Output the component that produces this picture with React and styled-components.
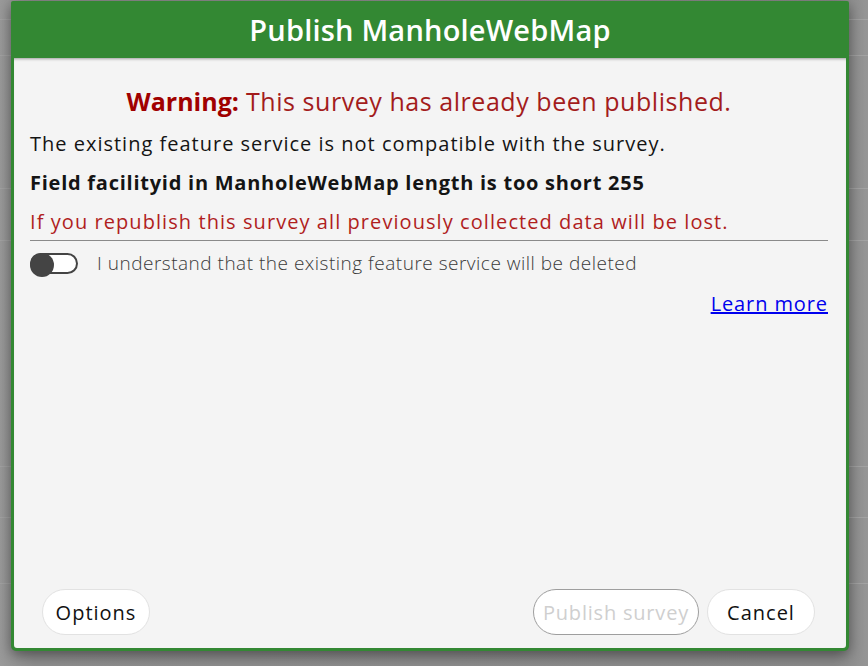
import React, { useState } from "react";
import styled, { createGlobalStyle } from "styled-components";

const GlobalStyle = createGlobalStyle`
	html, body {
		margin: 0;
		padding: 0;
	}
	body {
		font-family: "Open Sans", Lato, sans-serif;
	}
`;

const rows = [19, 35, 132, 51, 225, 50, 65, 89];

const App = () => {
	const [agree, setAgree] = useState(false);

	return (
		<Page>
			<GlobalStyle />
			<Backdrop>
				{rows.map((h, i) => (
					<BackRow key={i} $h={h} />
				))}
			</Backdrop>

			<Dialog>
				<Header>Publish ManholeWebMap</Header>
				<Body>
					<Warning>
						<b>Warning:</b> This survey has already been published.
					</Warning>
					<Text $first>The existing feature service is not compatible with the survey.</Text>
					<Text $bold>Field facilityid in ManholeWebMap length is too short 255</Text>
					<Text $red>If you republish this survey all previously collected data will be lost.</Text>
					<Divider />
					<ToggleRow onClick={() => setAgree(!agree)}>
						<Track $on={agree}>
							<Knob $on={agree} />
						</Track>
						<ToggleLabel>I understand that the existing feature service will be deleted</ToggleLabel>
					</ToggleRow>
					<LinkRow>
						<More href="#">Learn more</More>
					</LinkRow>
					<Spacer />
					<Footer>
						<Button>Options</Button>
						<Right>
							<Button disabled={!agree}>Publish survey</Button>
							<Button>Cancel</Button>
						</Right>
					</Footer>
				</Body>
			</Dialog>
		</Page>
	);
};

export default App;

const Page = styled.div`
	position: relative;
	width: 868px;
	height: 666px;
	overflow: hidden;
	background: #8d8d8d;
`;

const Backdrop = styled.div`
	display: flex;
	flex-direction: column;
	background: linear-gradient(90deg, #9a9a9a 0%, #8e8e8e 4%, #8a8a8a 96%, #959595 100%);
	height: 100%;
`;

const BackRow = styled.div`
	height: ${({ $h }) => $h}px;
	border-bottom: 1px solid #a2a2a2;
	flex-shrink: 0;
`;

const Dialog = styled.div`
	position: absolute;
	left: 11px;
	top: 1px;
	width: 838px;
	height: 650px;
	box-sizing: border-box;
	background: #338833;
	border-radius: 2px 2px 5px 5px;
	padding: 0 3px 3px 3px;
	display: flex;
	flex-direction: column;
	box-shadow: 0 4px 14px rgba(0, 0, 0, 0.45);
`;

const Header = styled.div`
	height: 57px;
	display: flex;
	align-items: center;
	justify-content: center;
	color: #ffffff;
	font-size: 29px;
	font-weight: 600;
	letter-spacing: 0.2px;
	flex-shrink: 0;
`;

const Body = styled.div`
	flex: 1;
	background: #f4f4f4;
	border-radius: 0 0 3px 3px;
	box-shadow: inset 0 3px 3px -2px rgba(0, 0, 0, 0.35);
	display: flex;
	flex-direction: column;
	padding: 27px 18px 13px 16px;
`;

const Warning = styled.div`
	text-align: center;
	color: #a31c1c;
	font-size: 25px;
	line-height: 32px;
	letter-spacing: 0.55px;
	b {
		color: #a00000;
		font-weight: 700;
		letter-spacing: 0;
	}
`;

const Text = styled.div`
	font-size: 20px;
	line-height: 28px;
	white-space: nowrap;
	margin-top: ${({ $first }) => ($first ? 13 : 11)}px;
	font-weight: ${({ $bold }) => ($bold ? 700 : 400)};
	letter-spacing: ${({ $bold, $red }) => ($bold ? "0.75px" : $red ? "1.07px" : "1px")};
	color: ${({ $red }) => ($red ? "#b01e1e" : "#141414")};
`;

const Divider = styled.div`
	height: 1px;
	background: #8a8a8a;
	margin-top: 4px;
`;

const ToggleRow = styled.div`
	display: flex;
	align-items: center;
	gap: 19px;
	margin-top: 9px;
	cursor: pointer;
`;

const Track = styled.div`
	position: relative;
	width: 48px;
	height: 21px;
	box-sizing: border-box;
	border: 2px solid #444;
	border-radius: 11px;
	background: #fff;
	flex-shrink: 0;
`;

const Knob = styled.div`
	position: absolute;
	top: -2px;
	left: ${({ $on }) => ($on ? "24px" : "-2px")};
	width: 24px;
	height: 24px;
	border-radius: 50%;
	background: #444;
`;

const ToggleLabel = styled.span`
	font-size: 19px;
	font-weight: 300;
	letter-spacing: 0.5px;
	color: #3a3a3a;
`;

const LinkRow = styled.div`
	display: flex;
	justify-content: flex-end;
	margin-top: 14px;
`;

const More = styled.a`
	color: #0000ee;
	font-size: 20px;
	letter-spacing: 0.9px;
	text-decoration: underline;
`;

const Spacer = styled.div`
	flex: 1;
`;

const Footer = styled.div`
	display: flex;
	justify-content: space-between;
	align-items: center;
	padding: 0 13px 0 12px;
`;

const Right = styled.div`
	display: flex;
	gap: 8px;
`;

const Button = styled.button`
	height: 46px;
	min-width: 108px;
	padding: 0 ${({ disabled }) => (disabled ? 9 : 12)}px;
	border-radius: 23px;
	background: #fff;
	border: 1px solid ${({ disabled }) => (disabled ? "#9e9e9e" : "#e2e2e2")};
	color: ${({ disabled }) => (disabled ? "#cfcfcf" : "#111")};
	font-family: "Open Sans", Lato, sans-serif;
	font-size: 20px;
	letter-spacing: ${({ disabled }) => (disabled ? 0.8 : 1)}px;
	cursor: ${({ disabled }) => (disabled ? "default" : "pointer")};
`;
